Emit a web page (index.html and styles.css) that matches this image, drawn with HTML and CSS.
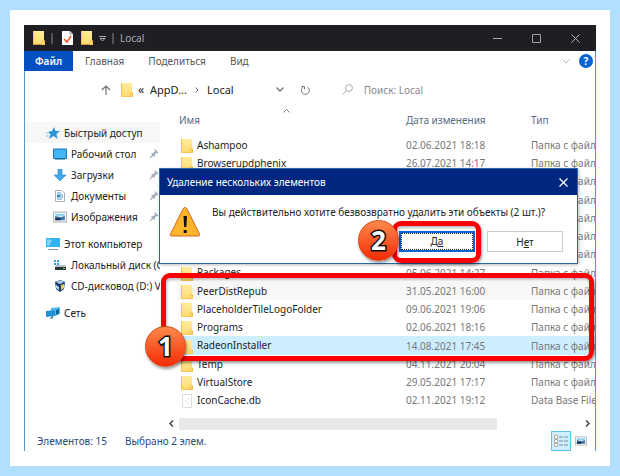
FILE: index.html
```html
<!DOCTYPE html>
<html lang="ru">
<head>
<meta charset="utf-8">
<title>Local</title>
<link rel="stylesheet" href="styles.css">
</head>
<body>
<svg class="defs" aria-hidden="true">
  <defs>
    <linearGradient id="fold" x1="0" y1="0" x2="0" y2="1"><stop offset="0" stop-color="#ffeb9e"/><stop offset="1" stop-color="#ffdb70"/></linearGradient>
    <symbol id="folder" viewBox="0 0 12 14"><path d="M0 0h11v9l1 1v4H9l-1-1H0z" fill="url(#fold)"/><path d="M0 13.5h9M9 10h2.500v3.500H9zM.5 0v13" fill="none" stroke="#f6b93e" stroke-width=".8"/></symbol>
    <symbol id="pin" viewBox="0 0 10 10"><path d="M6 0l3.500 3.500-1 .7-1-.2L6 5.800 5.700 8 4.300 7 1 9.500H.5V9L3 5.700 2 4.300l2.200-.3L6 2.500 5.500 1z" fill="#a3adbd"/></symbol>
    <symbol id="picture" viewBox="0 0 13 10"><path d="M.5.500h12v9H.5z" fill="#fff" stroke="#b4b8bd"/><path d="M2 2h9v2H2z" fill="#8dd4f5"/><path d="M2 4l5 1 4-1v4H2z" fill="#3e7baa"/><path d="M2 6h5v2H2z" fill="#173047"/></symbol>
  </defs>
</svg>
<main class="sheet">
  <div class="window">
    <header class="titlebar">
      <svg class="folder"><use href="#folder"/></svg>
      <span class="divider"></span>
      <svg class="check" viewBox="0 0 11 14"><path d="M0 0h8l3 3v11H0z" fill="#fff"/><path d="M8 0v3h3" fill="none" stroke="#999"/><path d="M2 8l3 3 4-6" fill="none" stroke="#f4502a" stroke-width="1.500"/></svg>
      <svg class="folder"><use href="#folder"/></svg>
      <svg class="more" viewBox="0 0 7 6"><path d="M0 .5h7M1 2.500h5L3.500 5z" fill="none" stroke="#aaa"/></svg>
      <span class="divider second"></span>
      <span class="caption">Local</span>
      <button class="wbtn" aria-label="Свернуть"><svg viewBox="0 0 9 9"><path d="M0 4.500h9" stroke="#aaa" fill="none"/></svg></button>
      <button class="wbtn" aria-label="Развернуть"><svg viewBox="0 0 9 9"><path d="M.5.500h8v8h-8z" stroke="#a99ba9" fill="none"/></svg></button>
      <button class="wbtn" aria-label="Закрыть"><svg viewBox="0 0 9 9"><path d="M.5.500l8 8M8.500.500l-8 8" stroke="#b5b0b5" fill="none"/></svg></button>
    </header>
    <nav class="tabs">
      <button class="tab file">Файл</button>
      <button class="tab home">Главная</button>
      <button class="tab share">Поделиться</button>
      <button class="tab">Вид</button>
      <svg class="expand" viewBox="0 0 8 5"><path d="M.5.500L4 4 7.500.500" fill="none" stroke="#bbb"/></svg>
      <button class="help" aria-label="Справка">?</button>
    </nav>
    <div class="address">
      <svg class="up" viewBox="0 0 10 10"><path d="M5 10V1M.8 5L5 1l4.200 4" fill="none" stroke="#707070" stroke-width="1.200"/></svg>
      <svg class="folder"><use href="#folder"/></svg>
      <span class="guillemet">«</span>
      <a class="crumb" href="#">AppD...</a>
      <svg class="chev" viewBox="0 0 4 6"><path d="M.5.500L3 3 .5 5.500" fill="none" stroke="#666"/></svg>
      <a class="crumb" href="#">Local</a>
      <svg class="drop" viewBox="0 0 8 5"><path d="M.5.500L4 4 7.500.500" fill="none" stroke="#777" stroke-width="1.300"/></svg>
      <svg class="refresh" viewBox="0 0 9 10"><path d="M2.200 2A4 4 0 1 0 6.500 2M.5 1.500h3v3" fill="none" stroke="#777"/></svg>
      <label class="search">
        <svg viewBox="0 0 11 11"><circle cx="7" cy="4" r="3.400" fill="none" stroke="#aaa"/><path d="M4.500 6.500L.5 10.500" stroke="#aaa"/></svg>
        <input type="search" placeholder="Поиск: Local" aria-label="Поиск: Local">
      </label>
    </div>
    <div class="body">
      <nav class="side">
        <a class="root quick" href="#"><svg viewBox="0 0 14 12"><path d="M8 0l1.500 4H14l-3.500 3 1 5L7.500 9 3 12l1.500-4.500L2 5l4-1z" fill="#2b96dc"/><path d="M0 9h3M0 6h2" stroke="#7dbfe8"/></svg>Быстрый доступ</a>
        <a href="#"><svg viewBox="0 0 14 12"><path d="M.5 1h13v9.500H.5z" fill="#42b5f7" stroke="#1778bd"/><path d="M2 11h10" stroke="#0d5f9c"/></svg>Рабочий стол<svg class="pin"><use href="#pin"/></svg></a>
        <a href="#"><svg viewBox="0 0 14 12"><path d="M5 0h4v6h4l-6 6-6-6h4z" fill="#42a9ea" stroke="#2586c8" stroke-width=".6"/></svg>Загрузки<svg class="pin"><use href="#pin"/></svg></a>
        <a href="#"><svg viewBox="0 0 14 12"><path d="M2.500.500H9L11.500 3v8.500h-9z" fill="#fff" stroke="#aab2b9"/><path d="M4 3h4M4 5h6M4 7h6M4 9h5" stroke="#49a2d0"/><path d="M4 5h3v2H4z" fill="#2c84b8"/></svg>Документы<svg class="pin"><use href="#pin"/></svg></a>
        <a href="#"><svg><use href="#picture"/></svg>Изображения<svg class="pin"><use href="#pin"/></svg></a>
        <a class="root gap" href="#"><svg viewBox="0 0 14 12"><path d="M0 0h14v9H0z" fill="#35b0f2"/><path d="M1 1l5 1-3 6H1z" fill="#83d4fa"/><path d="M2 11.500h10" stroke="#7d98a8"/></svg>Этот компьютер</a>
        <a href="#"><svg viewBox="0 0 14 12"><path d="M1 1h2v2H1zM4 1h2v2H4zM1 4h2v2H1zM4 4h2v2H4z" fill="#22a4ef"/><path d="M2 8l1-2h9l1 2z" fill="#b9bfc4"/><path d="M2 8h11v3H2z" fill="#2c3438"/><path d="M10 9.500h2" stroke="#54db77"/></svg>Локальный диск (C:)</a>
        <a href="#"><svg viewBox="0 0 14 12"><path d="M7 0l5 2-1 7-4 3-4-3-1-7z" fill="#173d72"/><path d="M3 2l4 2 4-2-4-1.500zM3 5l3 2v3L3 8z" fill="#b9d3ec"/><path d="M8 5l3-1v4L8 10z" fill="#e8cd58"/></svg>CD-дисковод (D:) V</a>
        <a class="root net" href="#"><svg viewBox="0 0 14 12"><path d="M5 1l9-1v7l-5 2H5z" fill="#4fb8ee"/><path d="M0 4l9-1v6l-9 1z" fill="#2291d4"/><path d="M10 3l3-1v4l-3 2zM3 12l4-1v-2" fill="#126199"/></svg>Сеть</a>
      </nav>
      <section class="content">
        <svg class="sort" viewBox="0 0 7 4"><path d="M.5 3.500l3-3 3 3" fill="none" stroke="#777"/></svg>
        <table>
          <thead><tr><th class="name">Имя</th><th class="date">Дата изменения</th><th>Тип</th></tr></thead>
          <tbody>
            <tr><td><svg class="folder"><use href="#folder"/></svg>Ashampoo</td><td>02.06.2021 18:18</td><td>Папка с файлами</td></tr>
            <tr><td><svg class="folder"><use href="#folder"/></svg>Browserupdphenix</td><td>26.07.2021 14:17</td><td>Папка с файлами</td></tr>
            <tr><td></td><td></td><td>Папка с файлами</td></tr>
            <tr><td></td><td></td><td>Папка с файлами</td></tr>
            <tr><td></td><td></td><td>Папка с файлами</td></tr>
            <tr><td></td><td></td><td>Папка с файлами</td></tr>
            <tr><td></td><td></td><td>Папка с файлами</td></tr>
            <tr><td><svg class="folder"><use href="#folder"/></svg>Packages</td><td>05.06.2021 14:27</td><td>Папка с файлами</td></tr>
            <tr class="marked"><td><svg class="folder"><use href="#folder"/></svg>PeerDistRepub</td><td>31.05.2021 16:00</td><td>Папка с файлами</td></tr>
            <tr><td><svg class="folder"><use href="#folder"/></svg>PlaceholderTileLogoFolder</td><td>09.06.2021 19:06</td><td>Папка с файлами</td></tr>
            <tr><td><svg class="folder"><use href="#folder"/></svg>Programs</td><td>02.06.2021 18:16</td><td>Папка с файлами</td></tr>
            <tr class="selected"><td><svg class="folder"><use href="#folder"/></svg>RadeonInstaller</td><td>14.08.2021 17:45</td><td>Папка с файлами</td></tr>
            <tr><td><svg class="folder"><use href="#folder"/></svg>Temp</td><td>04.11.2021 20:04</td><td>Папка с файлами</td></tr>
            <tr><td><svg class="folder"><use href="#folder"/></svg>VirtualStore</td><td>29.05.2021 17:17</td><td>Папка с файлами</td></tr>
            <tr><td><svg class="folder" viewBox="0 0 12 14"><path d="M1.500.500h9v13h-9z" fill="#fff" stroke="#ddd"/><path d="M4 7h1M7 5h1M6 9h1" stroke="#9cc"/></svg>IconCache.db</td><td>02.11.2021 19:12</td><td>Data Base File</td></tr>
          </tbody>
        </table>
        <div class="scroll">
          <svg viewBox="0 0 5 7"><path d="M4 .5L1 3.500l3 3" fill="none" stroke="#444" stroke-width="1.500"/></svg>
          <span class="track"></span>
          <svg viewBox="0 0 5 7"><path d="M1 .5l3 3-3 3" fill="none" stroke="#444" stroke-width="1.500"/></svg>
        </div>
      </section>
    </div>
    <footer class="status">
      <span>Элементов: 15</span>
      <span>Выбрано 2 элем.</span>
      <button class="view on" aria-label="Таблица"><svg viewBox="0 0 14 12"><path d="M.5.500h3v3h-3zM.5 4.500h3v3h-3zM.5 8.500h3v3h-3z" fill="#fff" stroke="#b9a99c"/><path d="M5 2h4M10 2h4M5 6h4M10 6h4M5 10h4M10 10h4" stroke="#7c8b94"/></svg></button>
      <button class="view" aria-label="Эскизы"><svg class="pic"><use href="#picture"/></svg></button>
    </footer>

    <div class="dialog" role="dialog" aria-labelledby="dlg-title">
      <div class="dlg-head">
        <span id="dlg-title">Удаление нескольких элементов</span>
        <button class="dlg-close" aria-label="Закрыть"><svg viewBox="0 0 9 9"><path d="M.5.500l8 8M8.500.500l-8 8" stroke="#fff" stroke-width="1.200" fill="none"/></svg></button>
      </div>
      <div class="dlg-body">
        <svg class="warn" viewBox="0 0 32 31"><path d="M16 1.500c1 0 1.500.5 2 1.500l12.500 25c.6 1.400 0 2-1.500 2H3c-1.500 0-2.100-.6-1.500-2L14 3c.5-1 1-1.500 2-1.500z" fill="#fdb52c" stroke="#d8641d"/><path d="M14.500 10h3.500l-.7 11h-2.100zM14.700 24h3v3h-3z" fill="#111"/></svg>
        <div class="dlg-main">
          <p>Вы действительно хотите безвозвратно удалить эти объекты (2 шт.)?</p>
          <div class="actions">
            <button class="btn yes"><span>Д<u>а</u></span></button>
            <button class="btn">Н<u>е</u>т</button>
          </div>
        </div>
      </div>
      <div class="frame frame-two"></div>
      <div class="badge badge-two">2</div>
    </div>
    <div class="frame frame-one"></div>
    <div class="badge badge-one">1</div>
  </div>
</main>
</body>
</html>
```
FILE: styles.css
```css
* { box-sizing: border-box; }
body {
  margin: 0;
  min-height: 100vh;
  padding: 10px;
  background: #b2deff;
  font: 10px/16px "Noto Sans", "Open Sans", sans-serif;
  color: #222;
}
button { font: inherit; color: inherit; background: none; border: 0; padding: 0; }
a { color: inherit; text-decoration: none; }
svg { flex: none; }
.defs { position: absolute; width: 0; height: 0; }
.sheet { background: #fff; padding: 15px 14px; min-height: calc(100vh - 20px); }
.window { position: relative; border: solid #4b9fca; border-width: 0 1px; }
.folder { width: 12px; height: 14px; }

.titlebar { display: flex; align-items: center; height: 26px; margin: 0 -1px; padding: 0 1px 0 9px; background: #1f1f23; color: #aaa; }
.divider { width: 2px; height: 11px; margin: 0 9px 0 6px; background: #56505a; }
.check { width: 11px; height: 14px; margin-right: 8px; }
.more { width: 7px; height: 6px; margin: 2px 0 0 6px; }
.divider.second { margin: 0 6px; }
.caption { flex: 1; }
.wbtn { width: 39px; height: 26px; display: flex; align-items: center; justify-content: center; }
.wbtn svg { width: 9px; height: 9px; }

.tabs { display: flex; align-items: center; height: 20px; padding-right: 2px; }
.tab { height: 20px; color: #555; }
.tab.file { width: 49px; margin-right: 12px; margin-left: -1px; background: #0450c0; color: #fff; font-weight: 600; }
.tab.home, .tab.share { margin-right: 24px; }
.expand { width: 8px; height: 5px; margin: 0 9px 0 auto; }
.help { width: 14px; height: 14px; border-radius: 50%; background: #0764d3; color: #fff; font-weight: 700; line-height: 14px; }

.address { display: flex; align-items: center; height: 37px; padding-left: 76px; }
.up { width: 10px; height: 10px; margin-right: 10px; }
.guillemet { width: 17px; padding-left: 5px; font-size: 12px; }
.crumb { font-size: 11px; }
.chev { width: 4px; height: 6px; margin: 0 8px; }
.drop { width: 8px; height: 5px; margin: 0 17px 0 42px; }
.refresh { width: 9px; height: 10px; margin-right: 32px; }
.search { flex: 1; display: flex; align-items: center; gap: 11px; }
.search svg { width: 11px; height: 11px; }
.search input { flex: 1; min-width: 0; border: 0; padding: 0; outline: 0; font: inherit; background: none; }
.search input::placeholder { color: #888; opacity: 1; }

.body { display: grid; grid-template-columns: 135px minmax(0, 1fr); }
.side { padding-top: 14px; overflow: hidden; }
.side a { display: flex; align-items: center; gap: 4px; height: 21px; padding-left: 28px; white-space: nowrap; }
.side svg { width: 14px; height: 12px; }
.side .root { padding-left: 21px; }
.side .quick { background: #f7f7f6; }
.side .gap, .side .net { margin-top: 6px; }
.side .pin { width: 10px; height: 10px; margin-left: auto; margin-right: 1px; }

.content { position: relative; overflow: hidden; }
.sort { position: absolute; left: 123px; top: 1px; width: 7px; height: 4px; }
table { width: calc(100% - 17px); margin-left: 17px; border-collapse: collapse; table-layout: fixed; }
th { height: 28px; padding: 0 2px 4px; font-weight: 400; text-align: left; color: #576b86; white-space: nowrap; }
.name { width: 227px; }
.date { width: 125px; }
td { height: 18px; padding: 0 2px; line-height: 16px; color: #777; white-space: nowrap; overflow: hidden; }
tr:nth-child(4n) td { height: 19px; }
td:first-child { color: #222; padding-left: 4px; }
td:last-child { padding-right: 0; }
td .folder { margin-right: 4px; vertical-align: middle; }
.marked { background: #f7f7f7; }
.selected { background: #cdeeff; }
.scroll { display: flex; align-items: center; height: 13px; margin-top: 8px; padding: 0 5px 0 9px; }
.scroll svg { width: 5px; height: 7px; }
.track { width: 318px; height: 12px; margin: 0 auto 0 5px; background: #e9e8e7; }

.status { display: flex; align-items: center; gap: 18px; height: 21px; padding: 0 8px 0 12px; color: #2a477c; }
.view { width: 20px; height: 20px; display: flex; align-items: center; justify-content: center; }
.view + .view { width: 12px; margin-left: -14px; }
.view svg { width: 14px; height: 12px; }
.view .pic { width: 12px; height: 10px; }
.view.on { margin-left: auto; border: 1px solid #5fc3f7; background: #cdeeff; }

.dialog { position: absolute; top: 143px; left: 134px; right: 17px; height: 96px; border: 1px solid #2867aa; background: #fff; box-shadow: 1px 1px 3px #0004; }
.dlg-head { display: flex; align-items: center; justify-content: space-between; height: 26px; padding: 0 9px 0 7px; background: #00277f; color: #fff; }
.dlg-close { display: flex; }
.dlg-close svg { width: 9px; height: 9px; }
.dlg-body { display: flex; gap: 11px; padding: 9px 14px 0 9px; }
.warn { width: 32px; height: 31px; margin-top: 2px; }
.dlg-main { flex: 1; min-width: 0; }
.dlg-main p { margin: 0 0 11px; white-space: nowrap; }
.actions { display: flex; justify-content: flex-end; gap: 12px; }
.btn { width: 76px; height: 21px; border: 1px solid #ccc; background: #fff; }
.btn.yes { border: 2px solid #0765d5; }
.btn.yes span { display: block; height: 17px; border: 1px dotted #222; line-height: 15px; }

.frame { position: absolute; border: 5px solid #fa0000; border-radius: 9px; box-shadow: 1px 2px 3px #0006, inset 1px 2px 3px #0004; pointer-events: none; }
.frame-one { left: 136px; right: 1px; top: 248px; height: 88px; }
.frame-two { left: 232px; right: 96px; top: 52px; height: 42px; }
.badge {
  position: absolute;
  width: 41px;
  height: 41px;
  border-radius: 50%;
  background: linear-gradient(#ff8a4c, #fa5523 55%, #f02c08);
  border: 1px solid #d8471c;
  box-shadow: 1px 2px 3px #0006;
  color: #fff;
  font: 700 26px/39px "Open Sans", sans-serif;
  text-align: center;
  -webkit-text-stroke: 3px #111;
  paint-order: stroke fill;
}
.badge-one { left: 120px; top: 301px; }
.badge-two { left: 198px; top: 51px; }
```
